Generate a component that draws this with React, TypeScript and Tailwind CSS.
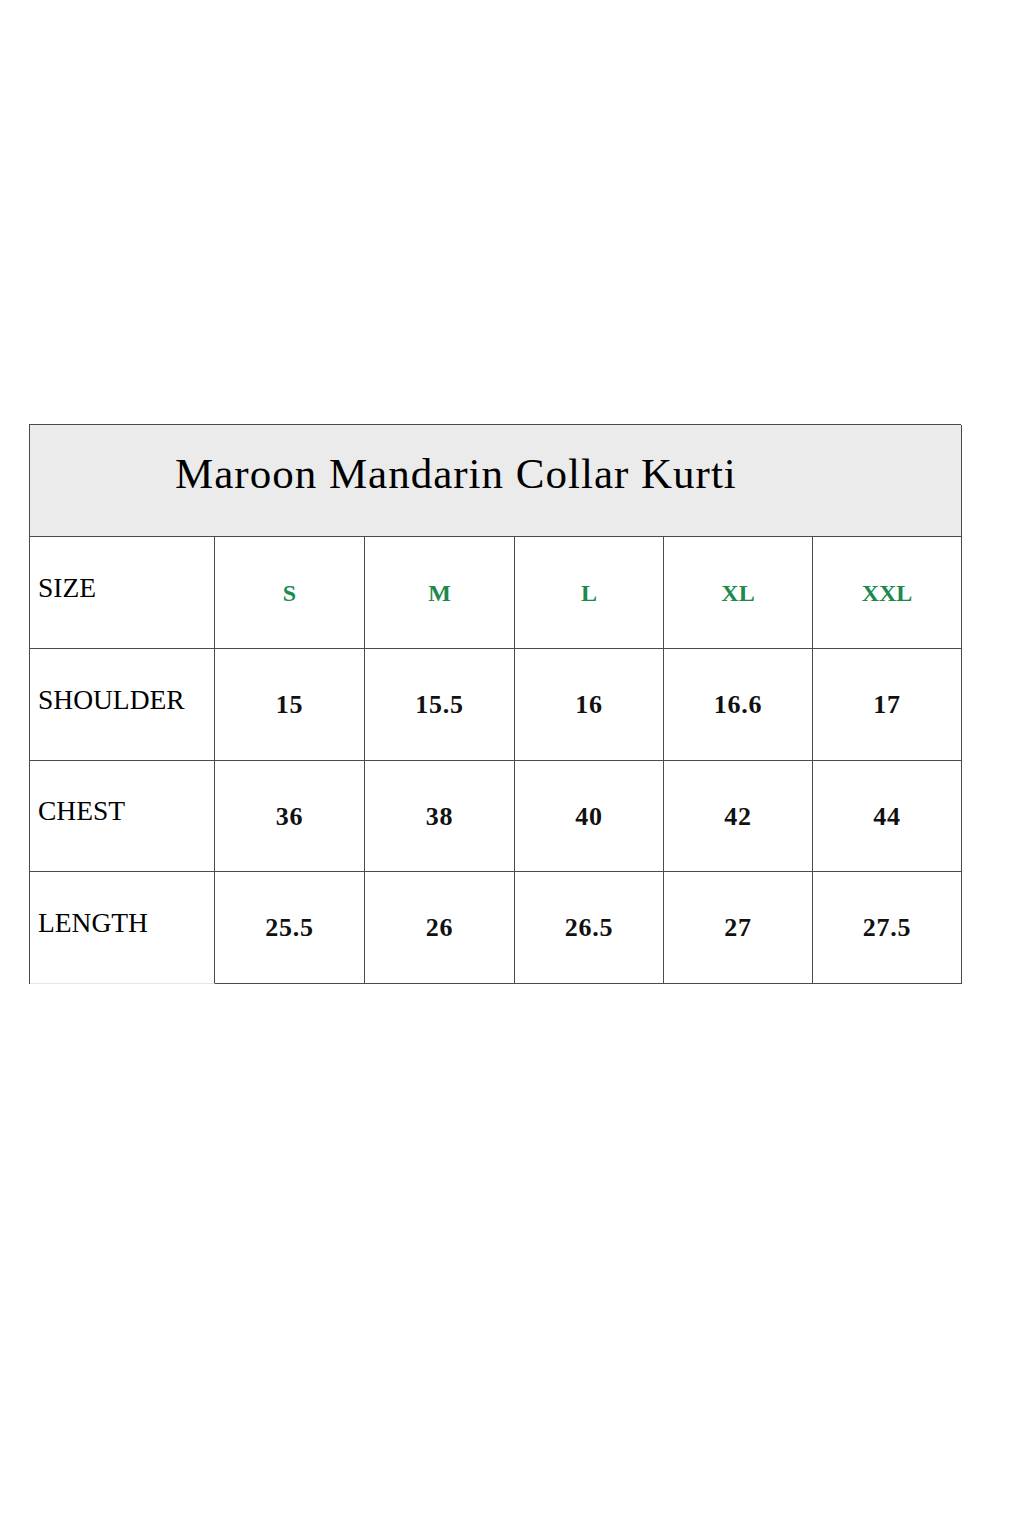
const SIZES = ["S", "M", "L", "XL", "XXL"];

const ROWS: { label: string; values: string[] }[] = [
  { label: "SHOULDER", values: ["15", "15.5", "16", "16.6", "17"] },
  { label: "CHEST", values: ["36", "38", "40", "42", "44"] },
  { label: "LENGTH", values: ["25.5", "26", "26.5", "27", "27.5"] },
];

const serif = "font-['Liberation_Serif','DejaVu_Serif',serif]";

function LabelCell({ text, last, short }: { text: string; last?: boolean; short?: boolean }) {
  return (
    <div
      className={`flex items-center border-r border-b border-r-[#4a4a4a] pl-[8px] pb-[10px] text-[27.5px] text-black ${
        short ? "h-[111px]" : "h-[112px]"
      } ${last ? "border-b-[#e6e6e6]" : "border-b-[#4a4a4a]"}`}
    >
      {text}
    </div>
  );
}

function ValueCell({ text, green, short }: { text: string; green?: boolean; short?: boolean }) {
  return (
    <div
      className={`flex items-center justify-center border-r border-b border-[#4a4a4a] font-bold ${
        short ? "h-[111px]" : "h-[112px]"
      } ${green ? "text-[24px] text-[#1b8a4c]" : "text-[26px] tracking-[0.8px] text-[#111]"}`}
    >
      {text}
    </div>
  );
}

export default function App() {
  return (
    <main className={`min-h-[1536px] w-[1024px] bg-white pt-[424px] pl-[29px] ${serif}`}>
      <div className="grid w-[932px] grid-cols-[185px_150px_150px_149px_149px_149px] border-l border-t border-[#4a4a4a]">
        <div className="col-span-6 flex h-[112px] items-center border-r border-b border-[#4a4a4a] bg-[#ebebeb] pl-[145px] pb-[12px] text-[43px] tracking-[1px] text-black">
          Maroon Mandarin Collar Kurti
        </div>

        <LabelCell text="SIZE" />
        {SIZES.map((s) => (
          <ValueCell key={s} text={s} green />
        ))}

        {ROWS.map((row, i) => (
          <div key={row.label} className="contents">
            <LabelCell text={row.label} last={i === ROWS.length - 1} short={i === 1} />
            {row.values.map((v, j) => (
              <ValueCell key={j} text={v} short={i === 1} />
            ))}
          </div>
        ))}
      </div>
    </main>
  );
}
